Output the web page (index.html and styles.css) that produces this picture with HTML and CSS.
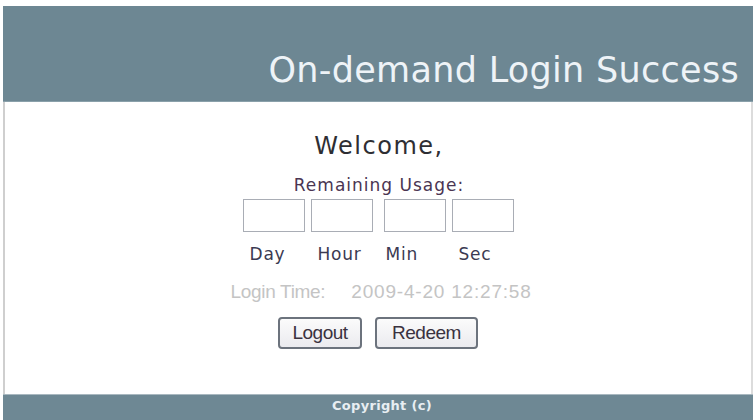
FILE: index.html
```html
<!DOCTYPE html>
<html>
<head>
<meta charset="utf-8">
<title>On-demand Login Success</title>
<link rel="stylesheet" href="styles.css">
</head>
<body>
<div class="frame">
  <div class="header">
    <h1 class="title">On-demand Login Success</h1>
  </div>
  <div class="content">
    <div class="welcome">Welcome,</div>
    <div class="usage-label">Remaining Usage:</div>
    <div class="usage">
      <div class="cell"><input class="box" type="text"><span class="unit">Day</span></div>
      <div class="cell"><input class="box" type="text"><span class="unit">Hour</span></div>
      <div class="cell wide"><input class="box" type="text"><span class="unit unit-tight">Min</span></div>
      <div class="cell"><input class="box" type="text"><span class="unit">Sec</span></div>
    </div>
    <div class="login-time"><span class="lt-label">Login Time:</span><span class="lt-value">2009-4-20 12:27:58</span></div>
    <div class="actions">
      <button class="btn btn-logout" type="button">Logout</button>
      <button class="btn btn-redeem" type="button">Redeem</button>
    </div>
  </div>
  <div class="footer">Copyright (c)</div>
</div>
</body>
</html>
```
FILE: styles.css
```css
html, body {
  margin: 0;
  padding: 0;
  background: #ffffff;
  overflow: hidden;
}

body {
  padding: 6px 0 0 3px;
  font-family: "DejaVu Sans", Verdana, sans-serif;
}

.frame {
  width: 750px;
  display: flex;
  flex-direction: column;
}

.header {
  height: 95px;
  background: #6d8793;
  display: flex;
  align-items: flex-end;
  justify-content: flex-end;
  border-bottom: 1px solid #8aa0aa;
}

.title {
  margin: 0 14px 11px 0;
  font-weight: normal;
  font-size: 35px;
  line-height: 40px;
  color: #eef3f7;
  letter-spacing: 0.3px;
}

.content {
  height: 292px;
  background: #ffffff;
  border-left: 2px solid #cfcfcf;
  border-right: 2px solid #dcdcdc;
  display: flex;
  flex-direction: column;
  align-items: center;
  padding-top: 30px;
  box-sizing: border-box;
  padding-left: 2px;
}

.welcome {
  font-size: 24px;
  line-height: 28px;
  color: #2e2e33;
  letter-spacing: 1.5px;
}

.usage-label {
  margin-top: 15px;
  font-size: 17px;
  line-height: 20px;
  color: #4a3552;
  letter-spacing: 1px;
}

.usage {
  margin-top: 4px;
  display: flex;
  gap: 6px;
  margin-left: -2px;
}

.cell {
  width: 62px;
  display: flex;
  flex-direction: column;
  align-items: flex-start;
}

.cell.wide {
  margin-left: 5px;
}

.box {
  width: 62px;
  height: 33px;
  box-sizing: border-box;
  border: 1px solid #a9adb5;
  background: #ffffff;
  margin: 0;
  padding: 0;
}

.unit {
  margin-top: 12px;
  padding-left: 7px;
  font-size: 17px;
  line-height: 20px;
  color: #3b3a52;
  letter-spacing: 0.8px;
}

.unit-tight {
  padding-left: 2px;
}

.login-time {
  margin-top: 17px;
  font-family: "Liberation Sans", Arial, sans-serif;
  font-size: 19px;
  line-height: 22px;
  color: #c4c4c4;
  display: flex;
  gap: 26px;
  padding-left: 4px;
}

.lt-label {
  letter-spacing: -0.3px;
}

.lt-value {
  letter-spacing: 0.8px;
}

.actions {
  margin-top: 14px;
  display: flex;
  gap: 13px;
  margin-left: -2px;
}

.btn {
  height: 32px;
  border: 2px solid #6c737d;
  border-radius: 4px;
  background: linear-gradient(#fbfbfb, #ebebef);
  font-family: "Liberation Sans", Arial, sans-serif;
  font-size: 19px;
  color: #3a3240;
  padding: 0;
  letter-spacing: -0.5px;
}

.btn-logout {
  width: 84px;
}

.btn-redeem {
  width: 103px;
}

.footer {
  height: 30px;
  background: #6e8894;
  border-top: 1px solid #a9b8c0;
  color: #e8eef2;
  font-size: 13px;
  font-weight: bold;
  text-align: center;
  line-height: 22px;
  padding-left: 8px;
  letter-spacing: 0.3px;
}
```
